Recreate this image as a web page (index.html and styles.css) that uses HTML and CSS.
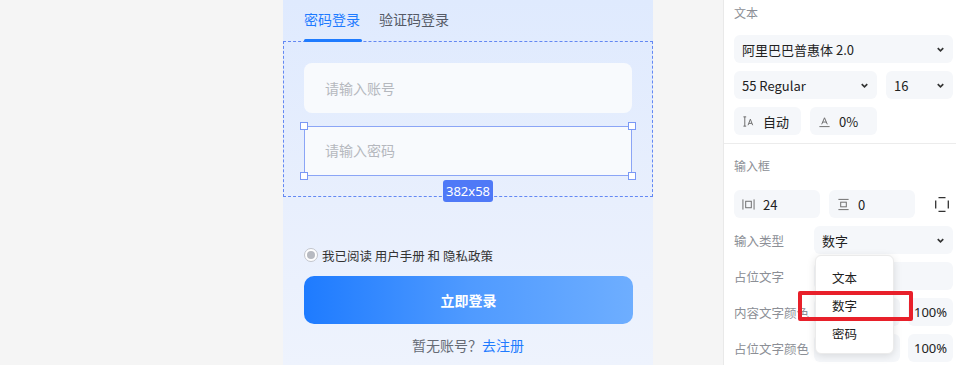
FILE: index.html
```html
<!DOCTYPE html>
<html lang="zh">
<head>
<meta charset="utf-8">
<link rel="stylesheet" href="styles.css">
</head>
<body>
<div class="app">
  <div class="canvas">
    <div class="phone">
      <div class="tabs">
        <div class="tab active">密码登录</div>
        <div class="tab">验证码登录</div>
      </div>
      <div class="form">
        <div class="input">请输入账号</div>
        <div class="input selected">请输入密码
          <span class="h tl"></span><span class="h tr"></span><span class="h bl"></span><span class="h br"></span>
          <span class="size">382x58</span>
        </div>
      </div>
      <div class="agree"><span class="radio"></span>我已阅读 用户手册 和 隐私政策</div>
      <div class="btn">立即登录</div>
      <div class="reg">暂无账号？<span class="link">去注册</span></div>
    </div>
  </div>
  <div class="panel">
    <div class="sec">
      <div class="label">文本</div>
      <div class="field sel"><span>阿里巴巴普惠体 2.0</span><svg class="chev" viewBox="0 0 10 10"><path d="M2.5 3.8 5 6.3 7.5 3.8" /></svg></div>
      <div class="row">
        <div class="field sel w143"><span>55 Regular</span><svg class="chev" viewBox="0 0 10 10"><path d="M2.5 3.8 5 6.3 7.5 3.8" /></svg></div>
        <div class="field sel w67"><span>16</span><svg class="chev" viewBox="0 0 10 10"><path d="M2.5 3.8 5 6.3 7.5 3.8" /></svg></div>
      </div>
      <div class="row">
        <div class="field w67"><svg class="ic" viewBox="0 0 14 14"><path d="M1.5 2h3M3 2v10M1.5 12h3" /><path d="M6.5 11 9 4.5 11.5 11M7.4 9h3.2" /></svg><span class="val">自动</span></div>
        <div class="field w67"><svg class="ic" viewBox="0 0 14 14"><path d="M4 10 7 3l3 7M5.2 7.6h3.6" /><path d="M1.5 12.5h11" /></svg><span class="val">0%</span></div>
      </div>
    </div>
    <div class="sec">
      <div class="label">输入框</div>
      <div class="row r2">
        <div class="field w86"><svg class="ic" viewBox="0 0 14 14"><path d="M1 1.5v11M13 1.5v11" /><rect x="4" y="3.5" width="6" height="7" /></svg><span class="val">24</span></div>
        <div class="field w86"><svg class="ic" viewBox="0 0 14 14"><path d="M1.5 1.5h11M1.5 12.5h11" /><rect x="4" y="4.5" width="6" height="5" /></svg><span class="val">0</span></div>
        <svg class="corner" viewBox="0 0 14 15"><path d="M3.5 0.7H10.5M3.5 14.3H10.5M0.7 3.5V11.5M13.3 3.5V11.5" /></svg>
      </div>
      <div class="prow">
        <div class="plabel">输入类型</div>
        <div class="field sel w139"><span>数字</span><svg class="chev" viewBox="0 0 10 10"><path d="M2.5 3.8 5 6.3 7.5 3.8" /></svg></div>
      </div>
      <div class="prow">
        <div class="plabel">占位文字</div>
        <div class="field w139"></div>
      </div>
      <div class="prow">
        <div class="plabel">内容文字颜色</div>
        <div class="field w86"></div>
        <div class="field w45 pct">100%</div>
      </div>
      <div class="prow">
        <div class="plabel">占位文字颜色</div>
        <div class="field w86"></div>
        <div class="field w45 pct">100%</div>
      </div>
      <div class="menu">
        <div class="mi">文本</div>
        <div class="mi">数字</div>
        <div class="mi">密码</div>
      </div>
      <div class="redbox"></div>
    </div>
  </div>
</div>
</body>
</html>
```

FILE: styles.css
```css
* { box-sizing: border-box; }
html, body { margin: 0; padding: 0; }
body {
  width: 956px;
  height: 365px;
  overflow: hidden;
  background: #f5f5f5;
  font-family: "Noto Sans CJK SC", "Noto Sans", sans-serif;
}
.app { display: flex; height: 365px; }
.canvas {
  width: 723px;
  padding-left: 283px;
  background: #f5f5f5;
}
.phone {
  width: 370px;
  height: 365px;
  background: linear-gradient(180deg, #dfeafe 0%, #e8effd 55%, #eef3fd 100%);
  display: flex;
  flex-direction: column;
}
.tabs {
  display: flex;
  gap: 19px;
  padding-left: 21px;
  height: 41px;
}
.tab {
  font-size: 14px;
  line-height: 38px;
  color: #555a66;
  position: relative;
}
.tab.active { color: #1e7bff; }
.tab.active::after {
  content: "";
  position: absolute;
  left: 0; right: -2px; top: 39px;
  height: 3px;
  border-radius: 2px;
  background: #1e7bff;
}
.form {
  height: 156px;
  border: 1px dashed #6388f3;
  padding: 21px 20px 0 20px;
  display: flex;
  flex-direction: column;
  gap: 13px;
}
.input {
  height: 50px;
  border-radius: 8px;
  background: #f8fafd;
  font-size: 14px;
  color: #b5b8be;
  line-height: 50px;
  padding-left: 21px;
  position: relative;
}
.input.selected {
  border-radius: 0;
  border: 1.5px solid #8ba5f6;
  line-height: 47px;
  padding-left: 20px;
  margin-right: 0;
}
.h {
  position: absolute;
  width: 8px; height: 8px;
  background: #fff;
  border: 1px solid #7a98f5;
}
.h.tl { left: -5px; top: -5px; }
.h.tr { right: -5px; top: -5px; }
.h.bl { left: -5px; bottom: -5px; }
.h.br { right: -5px; bottom: -5px; }
.size {
  position: absolute;
  left: 138px;
  top: 53px;
  width: 50px;
  height: 22px;
  border-radius: 3px;
  background: #4f79f7;
  color: #fff;
  font-size: 13px;
  line-height: 22px;
  text-align: center;
  font-family: "Noto Sans", sans-serif;
}
.agree {
  margin-top: 51px;
  padding-left: 21px;
  display: flex;
  align-items: center;
  font-size: 12.5px;
  color: #333;
  height: 14px;
}
.radio {
  width: 14px; height: 14px;
  border-radius: 50%;
  border: 1px solid #c2c5cc;
  background: #fff;
  margin-right: 4px;
  display: flex;
  align-items: center;
  justify-content: center;
}
.radio::after {
  content: "";
  width: 8px; height: 8px;
  border-radius: 50%;
  background: #b7bac1;
}
.btn {
  margin: 14px 20px 0 21px;
  height: 48px;
  border-radius: 10px;
  background: linear-gradient(90deg, #1e7bff 0%, #4f9aff 50%, #6eaeff 100%);
  color: #fff;
  font-weight: 700;
  font-size: 14px;
  line-height: 48px;
  text-align: center;
}
.reg {
  margin-top: 10px;
  text-align: center;
  font-size: 14px;
  color: #666b75;
  line-height: 22px;
}
.link { color: #1e7bff; }

.panel {
  width: 233px;
  background: #fff;
  border-left: 1px solid #e9e9e9;
}
.sec {
  padding: 0 3px 0 10px;
  position: relative;
}
.sec + .sec {
  border-top: 1px solid #ececec;
  padding-top: 9px;
}
.label {
  font-size: 12px;
  color: #8c8f96;
  line-height: 26px;
  margin-bottom: 9px;
}
.sec + .sec .label { margin-bottom: 11px; }
.field {
  height: 28px;
  border-radius: 6px;
  background: #f5f7fa;
  display: flex;
  align-items: center;
  padding-left: 8px;
  font-size: 13px;
  color: #222;
  flex-shrink: 0;
}
.sec > .field.sel { margin-bottom: 8px; }
.sel { justify-content: space-between; padding-right: 7px; }
.chev {
  width: 11px; height: 11px;
  fill: none;
  stroke: #333;
  stroke-width: 1.5;
}
.row { display: flex; gap: 9px; margin-bottom: 8px; }
.w143 { width: 143px; }
.w67 { width: 67px; }
.w86 { width: 86px; }
.w139 { width: 139px; }
.w45 { width: 45px; }
.ic {
  width: 13px; height: 13px;
  fill: none;
  stroke: #666;
  stroke-width: 1;
  margin-right: 8px;
  flex-shrink: 0;
}
.val { color: #222; }
.r2 { align-items: center; }
.corner {
  width: 14px; height: 15px;
  fill: none;
  stroke: #333;
  stroke-width: 1.3;
  margin-left: 11px;
}
.prow {
  display: flex;
  align-items: center;
  gap: 8px;
  height: 28px;
  margin-bottom: 8px;
}
.r2 + .prow { margin-top: 1px; }
.plabel {
  width: 72px;
  font-size: 12.5px;
  color: #8c8f96;
  white-space: nowrap;
}
.pct { padding-left: 6px; font-size: 13px; color: #222; font-family: "Noto Sans", sans-serif; }
.menu {
  position: absolute;
  left: 91px;
  top: 111px;
  width: 79px;
  height: 99px;
  background: #fff;
  border: 1px solid #ebebeb;
  border-radius: 6px;
  box-shadow: 0 2px 8px rgba(0, 0, 0, 0.12);
  padding-top: 8px;
  padding-left: 16px;
}
.mi {
  font-size: 12.5px;
  color: #222;
  line-height: 28px;
}
.redbox {
  position: absolute;
  left: 74px;
  top: 147px;
  width: 115px;
  height: 30px;
  border: 4px solid #e8202a;
  border-radius: 2px;
}
```
